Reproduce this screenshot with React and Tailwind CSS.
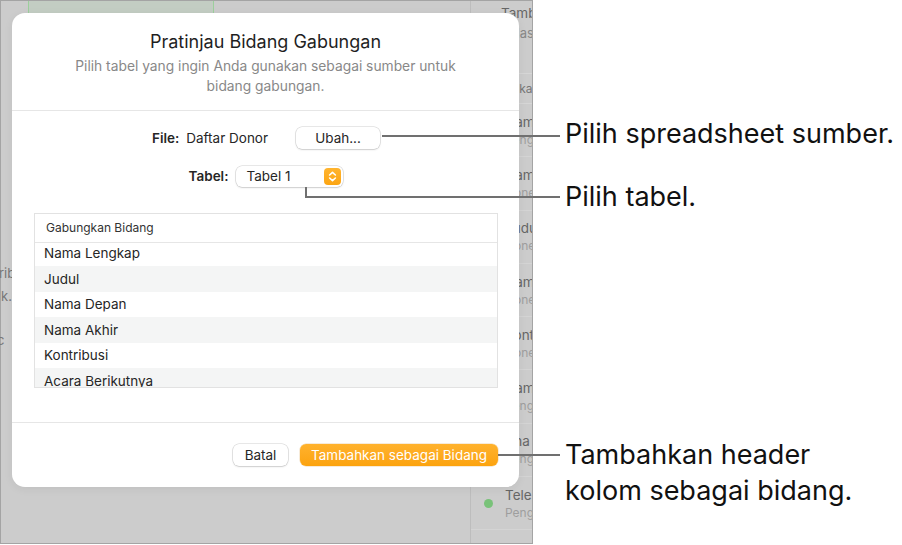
import React from "react";

const sidebarItems = [
  { t: "Nama Lengkap", s: "Pengganti" },
  { t: "Nama Depan", s: "None" },
  { t: "Judul", s: "None" },
  { t: "Nama Akhir", s: "None" },
  { t: "Kontribusi", s: "None" },
  { t: "Nama Panggilan", s: "Pengganti" },
  { t: "Ana", s: "Pengganti" },
  { t: "Telepon", s: "Pengganti", dot: true },
];

const rows = ["Nama Lengkap", "Judul", "Nama Depan", "Nama Akhir", "Kontribusi", "Acara Berikutnya"];

function Stepper() {
  return (
    <div className="w-[17px] h-[17px] rounded-[4px] bg-gradient-to-b from-[#ffb42e] to-[#fca511] flex items-center justify-center">
      <svg width="17" height="17" viewBox="0 0 17 17" fill="none" stroke="white" strokeWidth="1.6" strokeLinecap="round" strokeLinejoin="round">
        <path d="M5.6 7 L8.5 4.3 L11.4 7" />
        <path d="M5.6 10 L8.5 12.7 L11.4 10" />
      </svg>
    </div>
  );
}

export default function App() {
  return (
    <div className="relative w-[902px] h-[545px] bg-white flex overflow-hidden" style={{ fontFamily: "Inter, 'Noto Sans', sans-serif" }}>
      {/* background app screenshot */}
      <div className="w-[533px] h-[544px] shrink-0 border border-[#a4a4a4] bg-[#cccccc] flex">
        <div className="flex-1 min-w-0 flex flex-col">
          <div className="ml-[27px] w-[186px] h-[12px] bg-[#c3cdc3] border-x border-[#9ccf9c]" />
          <div className="mt-[250px] flex flex-col text-[13px] text-[#777] leading-[20px]">
            <div className="-ml-[2px]">rib</div>
            <div className="mt-[3px] ml-0">k.</div>
            <div className="mt-[24px] -ml-[4px]">c</div>
          </div>
        </div>
        <div className="w-[62px] shrink-0 border-l border-[#bdbdbd] flex flex-col text-[13.5px] overflow-hidden whitespace-nowrap">
          <div className="h-[73px] shrink-0 border-b border-[#d6d6d6] pl-[30px] pt-[2px]">
            <div className="text-[#666] leading-[20px]">Tambahkan</div>
            <div className="text-[#888] leading-[20px] text-[13px] -ml-[10px]">Berdasarkan urutan</div>
          </div>
          <div className="h-[30px] shrink-0 border-b border-[#d6d6d6] pl-[20px] flex items-center text-[#777] text-[12px]">Lengkap</div>
          {sidebarItems.map((it, i) => (
            <div key={i} className="h-[53.3px] border-b border-[#d4d4d4] flex items-center shrink-0">
              <div className="w-[34px] shrink-0 flex justify-center">
                {it.dot && <div className="w-[9px] h-[9px] rounded-full bg-[#79c279]" />}
              </div>
              <div className="flex flex-col">
                <div className="text-[#666] leading-[18px]">{it.t}</div>
                <div className="text-[#9e9e9e] text-[12px] leading-[17px]">{it.s}</div>
              </div>
            </div>
          ))}
        </div>
      </div>

      {/* annotations column */}
      <div className="flex-1 flex flex-col pl-[32px] text-[27px] text-[#111] leading-[32px] whitespace-nowrap">
        <div className="mt-[118px]">Pilih spreadsheet sumber.</div>
        <div className="mt-[31px]">Pilih tabel.</div>
        <div className="mt-[224px] leading-[36px]">
          Tambahkan header
          <br />
          kolom sebagai bidang.
        </div>
      </div>

      {/* dialog sheet */}
      <div className="absolute left-[12px] top-[13px] w-[507px] h-[474px] bg-white rounded-[13px] flex flex-col shadow-[0_2px_10px_rgba(0,0,0,0.06)]">
        <div className="pt-[17px] pb-[14px] flex flex-col items-center text-center border-b border-[#e6e6e6]">
          <div className="text-[18px] leading-[24px] text-[#1f1f1f]">Pratinjau Bidang Gabungan</div>
          <div className="mt-[2px] text-[13.8px] leading-[20px] text-[#888]">
            Pilih tabel yang ingin Anda gunakan sebagai sumber untuk
            <br />
            bidang gabungan.
          </div>
        </div>

        <div className="flex flex-col px-[22px] pr-[21px] text-[13.5px] text-[#262626]">
          <div className="mt-[16px] h-[22px] flex items-center justify-center">
            <span className="font-semibold">File:</span>
            <span className="ml-[7px]">Daftar Donor</span>
            <button className="ml-[28px] w-[84px] h-[22px] rounded-[6px] bg-white shadow-[0_0_0_0.5px_rgba(0,0,0,0.18),0_1px_2px_rgba(0,0,0,0.12)] flex items-center justify-center">Ubah...</button>
          </div>
          <div className="mt-[17px] h-[21px] flex items-center justify-center">
            <span className="font-semibold">Tabel:</span>
            <div className="ml-[8px] w-[107px] h-[21px] rounded-[6px] bg-white shadow-[0_0_0_0.5px_rgba(0,0,0,0.18),0_1px_2px_rgba(0,0,0,0.12)] flex items-center pl-[10px] pr-[2px]">
              <span className="flex-1">Tabel 1</span>
              <Stepper />
            </div>
          </div>

          <div className="mt-[26px] h-[175px] border border-[#e2e2e2] flex flex-col">
            <div className="h-[29px] shrink-0 border-b border-[#e6e6e6] flex items-center pl-[11px] text-[12px] text-[#333]">Gabungkan Bidang</div>
            <div className="flex-1 overflow-hidden flex flex-col">
              {rows.map((r, i) => (
                <div
                  key={r}
                  className={
                    "h-[25.5px] shrink-0 flex items-center pl-[9px] " +
                    (i % 2 === 1 ? "bg-[#f4f5f5] " : "bg-white ") +
                    (i === 0 ? "-mt-[2.5px]" : "")
                  }
                >
                  {r}
                </div>
              ))}
            </div>
          </div>
        </div>

        <div className="mt-[34px] border-t border-[#e6e6e6] flex justify-end items-center gap-[12px] pt-[21px] pr-[21px] text-[13.5px]">
          <button className="w-[55px] h-[22px] rounded-[6px] bg-white text-[#262626] shadow-[0_0_0_0.5px_rgba(0,0,0,0.18),0_1px_2px_rgba(0,0,0,0.12)] flex items-center justify-center">Batal</button>
          <button className="w-[198px] h-[22px] rounded-[6px] bg-gradient-to-b from-[#ffb22c] to-[#fca30d] text-white flex items-center justify-center shadow-[0_0_0_0.5px_rgba(200,120,0,0.3)]">Tambahkan sebagai Bidang</button>
        </div>
      </div>

      {/* callout lines */}
      <div className="absolute left-[382px] top-[135px] w-[178px] h-[2px] bg-[#707070]" />
      <div className="absolute left-[305px] top-[187px] w-[2px] h-[11px] bg-[#707070]" />
      <div className="absolute left-[305px] top-[196px] w-[255px] h-[2px] bg-[#707070]" />
      <div className="absolute left-[498px] top-[454px] w-[62px] h-[2px] bg-[#707070]" />
    </div>
  );
}
